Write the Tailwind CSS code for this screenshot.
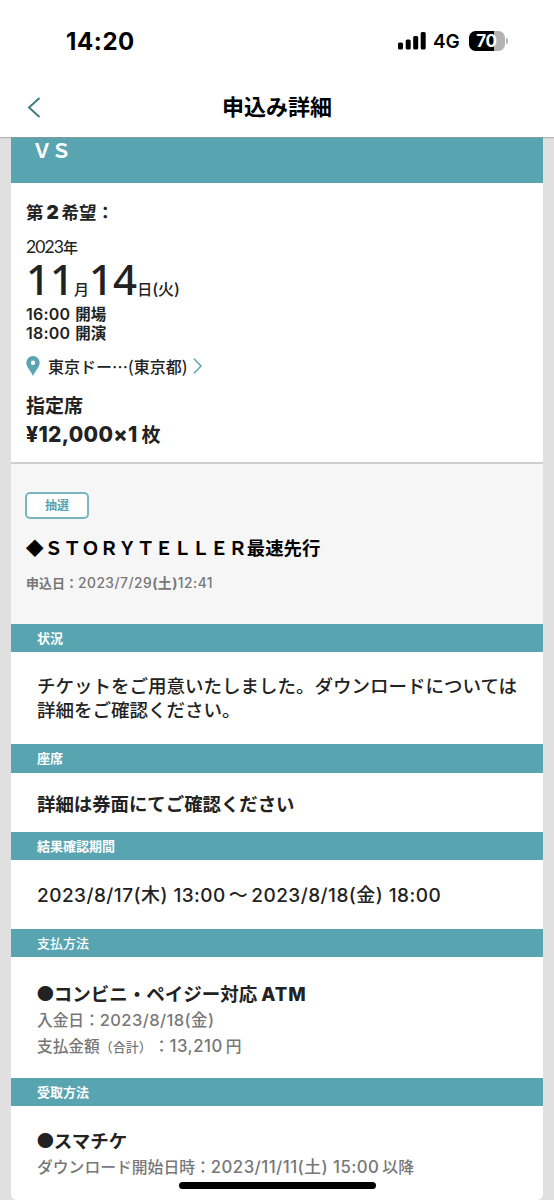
<!DOCTYPE html>
<html lang="ja">
<head>
<meta charset="utf-8">
<title>申込み詳細</title>
<script src="https://cdn.jsdelivr.net/npm/@tailwindcss/browser@4"></script>
</head>
<body class="h-[1200px] w-[554px] overflow-hidden bg-[#e0e0e0] font-['Inter','Noto_Sans_CJK_JP',sans-serif] text-[#222] whitespace-nowrap [text-spacing-trim:space-all]">
<div class="flex h-[1200px] flex-col">
  <header class="relative z-10 h-[137px] shrink-0 bg-white text-black shadow-[0_1px_1px_rgba(150,150,150,0.6)]">
    <div class="flex h-[82px] items-center justify-between pr-[46px] pl-[66px]">
      <div class="pt-[2px] text-[24px] leading-[28px] font-bold"><span class="tracking-[0.6px]">14:20</span></div>
      <div class="flex items-center">
        <svg class="h-[18px] w-[28px]" viewBox="0 0 28 18"><rect x="0" y="10.500" width="5" height="7" rx="1.500"/><rect x="7.700" y="7.500" width="5" height="10" rx="1.500"/><rect x="15.200" y="4" width="5" height="13.500" rx="1.500"/><rect x="22.700" y="0" width="5" height="17.500" rx="1.500"/></svg>
        <span class="ml-[7px] w-[28px] pt-[2px] text-[19px] leading-[24px] font-semibold"><span class="tracking-[-0.2px]">4G</span></span>
        <div class="ml-[8px] flex h-[20px] w-[36px] items-center justify-center rounded-[6.500px] bg-[linear-gradient(to_right,#000_70%,#b3b3b3_70%)] pr-[1px] text-[17px] leading-[20px] font-bold text-white"><span class="tracking-[-0.4px]">70</span></div>
        <div class="ml-[1px] h-[6px] w-[2px] rounded-r-full bg-[#b3b3b3]"></div>
      </div>
    </div>
    <div class="relative flex h-[50px] items-center justify-center text-[22px] leading-[32px] font-bold">
      <svg class="absolute top-[15px] left-[27px] h-[21px] w-[14px]" viewBox="0 0 14 21" fill="none" stroke="#3d7f80" stroke-width="2"><path d="M12.500 1 2 10.500 12.500 20"/></svg>
      <h1>申込み詳細</h1>
    </div>
  </header>

  <main class="mx-[11px] flex h-[1063px] flex-col overflow-hidden rounded-b-[6px] bg-white">
    <div class="h-[46px] shrink-0 bg-[#58a4b1] pl-[21px] text-[20px] leading-[28px] font-semibold text-white"><span class="tracking-[-0.8px]">ＶＳ</span></div>

    <section class="h-[281px] shrink-0 border-b-2 border-[#cfcfcf] pt-[16px] pl-[15px]">
      <p class="h-[28px] text-[17.500px] leading-[28px] font-bold">第<span class="mr-[3px] ml-[3px] inline-block w-[12px] text-[19px] leading-[20px] font-black">2</span>希望：</p>
      <p class="mt-[8px] h-[24px] text-[15px] leading-[24px]"><span class="font-['Lato'] text-[17.500px] tracking-[-0.900px]">2023</span><span class="font-medium">年</span></p>
      <p class="mt-[1px] h-[38px] text-[15px] leading-[38px] font-medium"><span class="font-['Noto_Sans'] text-[42px] leading-[38px] font-medium">11</span>月<span class="font-['Noto_Sans'] text-[42px] leading-[38px] font-medium">14</span>日<span class="text-[16px]">(火)</span></p>
      <p class="mt-[7px] h-[19px] text-[15.500px] leading-[19px] font-bold"><span class="mr-[5px] text-[16px] font-semibold tracking-[0.2px]">16:00</span>開場</p>
      <p class="h-[19px] text-[15.500px] leading-[19px] font-bold"><span class="mr-[5px] text-[16px] font-semibold tracking-[0.2px]">18:00</span>開演</p>
      <p class="mt-[11px] flex h-[24px] items-center text-[16px] leading-[24px] font-medium">
        <svg class="h-[20px] w-[14px]" viewBox="0 0 14 20"><path fill="#58a4b1" fill-rule="evenodd" d="M7 0a6.700 6.700 0 0 1 6.700 6.700C13.700 11 9 15 7 20 5 15 .3 11 .3 6.700A6.700 6.700 0 0 1 7 0Zm0 4.600a2.200 2.200 0 1 0 0 4.400 2.200 2.200 0 0 0 0-4.400Z"/></svg>
        <span class="ml-[8px] font-['Noto_Sans_CJK_JP']">東京ドー…(東京都)</span>
        <svg class="ml-[6px] h-[16px] w-[9px]" viewBox="0 0 9 16" fill="none" stroke="#58a4b1" stroke-width="1.500"><path d="M1 .7 8 8 1 15.300"/></svg>
      </p>
      <p class="mt-[15px] h-[28px] text-[19px] leading-[28px] font-bold">指定席</p>
      <p class="h-[28px] text-[19px] leading-[28px] font-bold"><span class="mr-[4px] text-[21px] font-extrabold tracking-[0.300px]">¥12,000×1</span>枚</p>
    </section>

    <section class="h-[160px] shrink-0 bg-[#f6f6f6] pt-[28px] pl-[14px]">
      <div class="flex h-[27px] w-[64px] items-center justify-center rounded-[5px] border-2 border-[#58a4b1]/80 bg-white text-[12px] leading-[20px] font-bold text-[#58a4b1]">抽選</div>
      <h2 class="mt-[14px] h-[30px] text-[18.400px] leading-[30px] font-bold text-black">◆ＳＴＯＲＹＴＥＬＬＥＲ最速先行</h2>
      <p class="mt-[8px] ml-[1px] h-[24px] text-[13px] leading-[24px] font-medium text-[#777]"><b>申込日：</b><span class="text-[13.800px] tracking-[0.480px]">2023/7/29<b>(土)</b>12:41</span></p>
    </section>

    <h3 class="h-[28px] shrink-0 bg-[#58a4b1] pl-[26px] text-[13px] leading-[28px] font-bold text-white">状況</h3>
    <div class="h-[92px] shrink-0 pt-[22px] pl-[26px] text-[18.500px] leading-[24px] font-medium">チケットをご用意いたしました。ダウンロードについては<br>詳細をご確認ください。</div>

    <h3 class="h-[29px] shrink-0 bg-[#58a4b1] pl-[26px] text-[13px] leading-[29px] font-bold text-white">座席</h3>
    <div class="h-[59px] shrink-0 pt-[17px] pl-[26px] text-[18.400px] leading-[28px] font-bold">詳細は券面にてご確認ください</div>

    <h3 class="h-[28px] shrink-0 bg-[#58a4b1] pl-[26px] text-[13px] leading-[28px] font-bold text-white">結果確認期間</h3>
    <div class="h-[69px] shrink-0 pt-[22px] pl-[26px] text-[19px] leading-[28px] font-medium tracking-[0.460px]">2023/8/17(木) 13:00<span class="mx-[3px]">～</span>2023/8/18(金) 18:00</div>

    <h3 class="h-[28px] shrink-0 bg-[#58a4b1] pl-[26px] text-[13px] leading-[28px] font-medium text-white">支払方法</h3>
    <div class="h-[121px] shrink-0 pt-[23px] pl-[26px] text-[15.700px] font-medium text-[#777]">
      <p class="h-[27px] text-[18.500px] leading-[28px] font-bold text-[#222]"><span class="-mr-[1px] -ml-[1px] text-[20.500px] leading-[20px]">●</span>コンビニ・ペイジー対応<span class="ml-[4px] font-extrabold tracking-[1px]">ATM</span></p>
      <p class="h-[26px] leading-[26px]">入金日：<span class="text-[16.500px] tracking-[0.400px]">2023/8/18(金)</span></p>
      <p class="h-[26px] leading-[26px]">支払金額<span class="text-[13px]">（合計）</span><span class="ml-[2px]">：</span><span class="mr-[3px] text-[16.800px] tracking-[0.500px]">13,210</span>円</p>
    </div>

    <h3 class="h-[28px] shrink-0 bg-[#58a4b1] pl-[26px] text-[13px] leading-[28px] font-bold text-white">受取方法</h3>
    <div class="shrink-0 pt-[21px] pl-[26px] text-[15.800px] font-medium text-[#777]">
      <p class="h-[27px] text-[18.500px] leading-[28px] font-bold text-[#222]"><span class="-mr-[1px] -ml-[1px] text-[20.500px] leading-[20px]">●</span>スマチケ</p>
      <p class="h-[26px] leading-[26px]">ダウンロード開始日時：<span class="text-[16.800px] tracking-[0.450px]">2023/11/11(土) 15:00</span><span class="ml-[3px]">以降</span></p>
    </div>
  </main>
</div>
<div class="fixed top-[1182px] left-[179px] h-[7px] w-[197px] rounded-full bg-black"></div>
</body>
</html>
